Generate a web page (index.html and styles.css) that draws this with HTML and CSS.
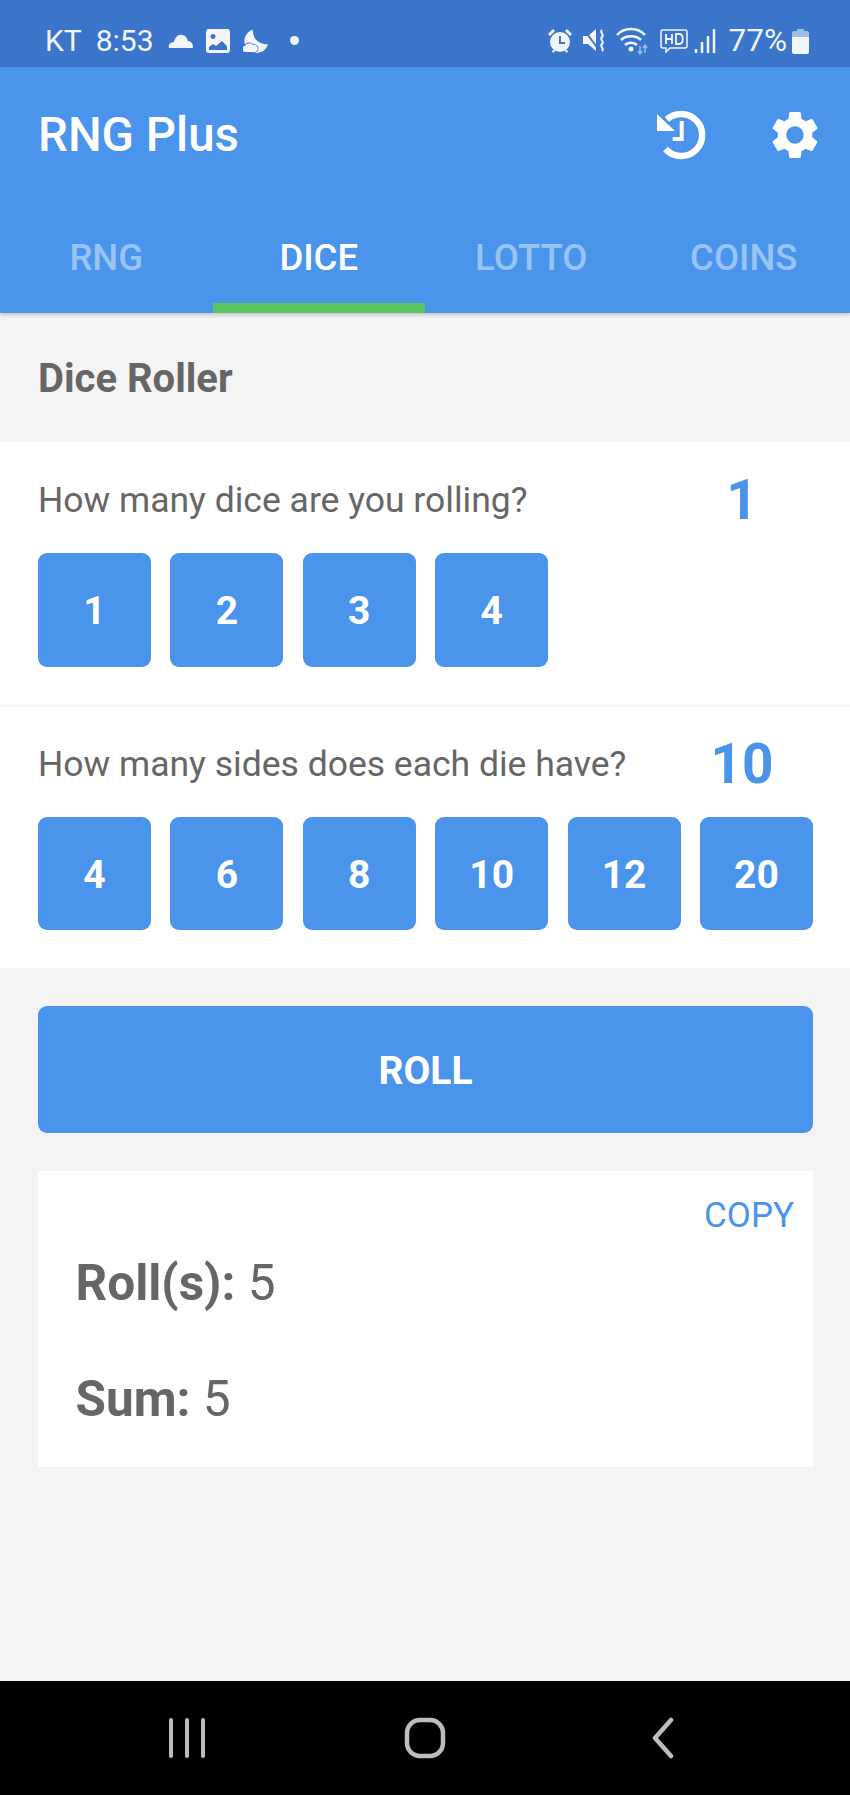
FILE: index.html
```html
<!DOCTYPE html>
<html lang='en'>
<head>
  <title>RNG Plus</title>
  <link rel="stylesheet" href="styles.css">
</head>
<body>
  <div class='phone'>
    <!-- Status Bar -->
    <div class='statusBar'>
      <div class='statusLeft'>
        <span class='carrier'>KT</span>
        <span>8:53</span>
        <svg class='cloudIcon' width='26' height='16' viewBox='0 0 26 16'><path d='M1 15c-1-3 1-6 5-6 1-4 4-8 8-7 3 0 5 3 6 6 3 0 5 3 5 6 0 1-1 1-2 1H2z' fill='#f2f6fc'/></svg>
        <svg class='photoIcon' width='24' height='24' viewBox='0 0 24 24'><path d='M3 0h18a3 3 0 0 1 3 3v18a3 3 0 0 1-3 3H3a3 3 0 0 1-3-3V3a3 3 0 0 1 3-3zM3 21h18v-4l-5-5-6 5-3-2-4 3zM7 5a2.500 2.500 0 1 0 0.010 0z' fill='#f2f6fc' fill-rule='evenodd'/></svg>
        <svg class='moonIcon' width='26' height='24' viewBox='0 0 26 24'><path d='M10 .5A12 12 0 1 0 25 15 13 13 0 0 1 10 .5z' fill='#f2f6fc'/><path d='M3 23a3 3 0 0 1-1-6c1-3 6-4 8-1a3.500 3.500 0 0 1 2 7z' fill='#f2f6fc' stroke='#3a75cb' stroke-width='1.500' paint-order='stroke'/></svg>
        <span class='dot'></span>
      </div>
      <div class='statusRight'>
        <svg width='26' height='26' viewBox='0 0 26 26'><circle cx='13' cy='14' r='10' fill='#f2f6fc'/><path d='M13 8v7h5' fill='none' stroke='#3a75cb' stroke-width='2'/><path d='M1 6l5-5 2 2-5 5zM25 6l-5-5-2 2 5 5zM5 23l3-2 1 1-3 3zM21 23l-3-2-1 1 3 3z' fill='#f2f6fc'/></svg>
        <svg class='muteIcon' width='24' height='26' viewBox='0 0 24 26'><path d='M0 8h5l8-7v22l-8-7H0z' fill='#f2f6fc'/><path d='M2 3l14 19' stroke='#3a75cb' stroke-width='2'/><path d='M19 2c-3 3 3 4 0 7s3 4 0 7 3 4 0 7' fill='none' stroke='#f2f6fc' stroke-width='2'/></svg>
        <svg class='wifiIcon' width='34' height='28' viewBox='0 0 34 28'><path d='M1 8c7-8 21-8 28 0M5 13c5-5 15-5 20 0M9 18c3-3 9-3 12 0' fill='none' stroke='#f2f6fc' stroke-width='2.500'/><circle cx='15' cy='22' r='2.500' fill='#f2f6fc'/><path d='M24 26v-7M29 26v-7M27 21l2-3 2 3M22 24l2 3 2-3' fill='none' stroke='#9dbde8' stroke-width='1.500'/></svg>
        <svg class='hdIcon' width='28' height='26' viewBox='0 0 28 26'><path d='M3 2h22a2 2 0 0 1 2 2v14a2 2 0 0 1-2 2H10l-4 4v-4H3a2 2 0 0 1-2-2V4a2 2 0 0 1 2-2z' fill='none' stroke='#f2f6fc' stroke-width='1.500'/><path d='M6 6v10M12 6v10M6 11h6M16 6v10h3c5 0 5-10 0-10z' fill='none' stroke='#f2f6fc' stroke-width='1.800'/></svg>
        <svg class='signalIcon' width='22' height='26' viewBox='0 0 22 26'><path d='M2 25v-4M8 25V14M14 25V8M20 25V1' stroke='#f2f6fc' stroke-width='2.500'/></svg>
        <span class='battery'>77%</span>
        <svg class='batteryIcon' width='17' height='26' viewBox='0 0 17 26'><path d='M5 1h7v2h3a2 2 0 0 1 2 2v4H0V5a2 2 0 0 1 2-2h3z' fill='#9dbde8'/><path d='M0 9h17v15a2 2 0 0 1-2 2H2a2 2 0 0 1-2-2z' fill='#f2f6fc'/></svg>
      </div>
    </div>

    <!-- App Bar and Tabs -->
    <div class='appBar'>
      <div class='titleRow'>
        <h1>RNG Plus</h1>
        <div class='appIcons'>
          <svg width='50' height='50' viewBox='0 0 50 50'><path d='M1 4v17h18z' fill='#fff'/><path d='M11 9.500A21 21 0 1 1 9.500 39' fill='none' stroke='#fff' stroke-width='6.500'/><path d='M25.700 11v18H16.700' fill='none' stroke='#fff' stroke-width='4'/></svg>
          <svg width='48' height='48' viewBox='2 2 20 20'><path d='M19.140 12.940c.04-.3.06-.61.06-.94 0-.32-.02-.64-.07-.94l2.030-1.580c.18-.14.23-.41.12-.61l-1.920-3.320c-.12-.22-.37-.29-.59-.22l-2.390.96c-.5-.38-1.030-.7-1.620-.94l-.36-2.540c-.04-.24-.24-.41-.48-.41h-3.840c-.24 0-.43.17-.47.41l-.36 2.540c-.59.24-1.130.57-1.620.94l-2.390-.96c-.22-.08-.47 0-.59.22L2.740 8.870c-.12.21-.08.47.12.61l2.030 1.580c-.05.3-.09.63-.09.94s.02.64.07.94l-2.030 1.580c-.18.14-.23.41-.12.61l1.920 3.320c.12.22.37.29.59.22l2.390-.96c.5.38 1.030.7 1.620.94l.36 2.540c.05.24.24.41.48.41h3.840c.24 0 .44-.17.47-.41l.36-2.540c.59-.24 1.130-.56 1.620-.94l2.390.96c.22.08.47 0 .59-.22l1.920-3.320c.12-.22.07-.47-.12-.61l-2.010-1.580zM12 15.600c-1.980 0-3.600-1.620-3.600-3.600s1.620-3.600 3.600-3.600 3.600 1.620 3.600 3.600-1.620 3.600-3.600 3.600z' fill='#fff'/></svg>
        </div>
      </div>
      <div class='tabs'>
        <div class='tab'>RNG</div>
        <div class='tab active'>DICE</div>
        <div class='tab'>LOTTO</div>
        <div class='tab'>COINS</div>
      </div>
    </div>

    <div class='content'>
      <h2>Dice Roller</h2>

      <!-- Dice Options -->
      <div class='options'>
        <div class='optionRow'>
          <div class='question'>
            <span>How many dice are you rolling?</span>
            <span class='picked'>1</span>
          </div>
          <div class='choices'>
            <button>1</button>
            <button>2</button>
            <button>3</button>
            <button>4</button>
          </div>
        </div>
        <div class='optionRow'>
          <div class='question'>
            <span>How many sides does each die have?</span>
            <span class='picked'>10</span>
          </div>
          <div class='choices'>
            <button>4</button>
            <button>6</button>
            <button>8</button>
            <button>10</button>
            <button>12</button>
            <button>20</button>
          </div>
        </div>
      </div>

      <button class='rollBtn'>ROLL</button>

      <!-- Result -->
      <div class='result'>
        <div class='copy'>COPY</div>
        <p><b>Roll(s):</b> 5</p>
        <p><b>Sum:</b> 5</p>
      </div>
    </div>

    <!-- Navigation Bar -->
    <div class='navBar'>
      <svg width='40' height='40' viewBox='0 0 40 40'><path d='M4 2v36M20 2v36M36 2v36' stroke='#bdbdbd' stroke-width='4' stroke-linecap='round'/></svg>
      <svg width='42' height='42' viewBox='0 0 42 42'><rect x='3' y='3' width='36' height='36' rx='13' fill='none' stroke='#bdbdbd' stroke-width='4.500'/></svg>
      <svg width='24' height='42' viewBox='0 0 24 42'><path d='M20 3L4 21l16 18' fill='none' stroke='#bdbdbd' stroke-width='4.500' stroke-linecap='round' stroke-linejoin='round'/></svg>
    </div>
  </div>
</body>
</html>
```

FILE: styles.css
```css
* {
  box-sizing: border-box;
}

body {
  margin: 0;
  background-color: #f4f4f4;
  font-family: Roboto, 'Noto Sans', sans-serif;
  color: #666666;
}

.phone {
  display: flex;
  flex-direction: column;
  width: 850px;
  height: 1795px;
  overflow: hidden;
}

.statusBar {
  display: flex;
  justify-content: space-between;
  align-items: center;
  height: 67px;
  padding: 14px 41px 0 45px;
  background-color: #3a75cb;
  color: #f2f6fc;
  font-size: 30px;
}

.statusLeft, .statusRight {
  display: flex;
  align-items: center;
}

.carrier {
  margin-right: 14px;
}

.cloudIcon {
  margin-left: 14px;
}

.photoIcon {
  margin-left: 12px;
}

.moonIcon {
  margin-left: 13px;
}

.dot {
  width: 9px;
  height: 9px;
  margin-left: 21px;
  border-radius: 50%;
  background-color: #f2f6fc;
}

.muteIcon {
  margin-left: 10px;
}

.wifiIcon {
  margin-left: 9px;
}

.hdIcon {
  margin-left: 10px;
}

.signalIcon {
  margin-left: 6px;
}

.battery {
  margin-left: 13px;
  font-size: 31.5px;
}

.batteryIcon {
  margin-left: 5px;
}

.appBar {
  height: 246px;
  background-color: #4a94ec;
  box-shadow: 0 2px 4px rgba(0, 0, 0, 0.2);
  z-index: 1;
}

.titleRow {
  display: flex;
  justify-content: space-between;
  align-items: center;
  height: 136px;
  padding: 0 31px 0 38px;
}

h1 {
  margin: 0;
  color: white;
  font-size: 47.5px;
  font-weight: 500;
}

.appIcons {
  display: flex;
  align-items: center;
  gap: 65.5px;
}

.tabs {
  display: flex;
  height: 110px;
}

.tab {
  flex: 1;
  padding-top: 33px;
  border-bottom: 10px solid transparent;
  color: #98c3f5;
  font-size: 36.5px;
  font-weight: 500;
  text-align: center;
}

.tab.active {
  border-bottom-color: #5cc460;
  color: white;
}

.content {
  flex: 1;
}

h2 {
  margin: 0;
  padding: 3px 38px 0;
  font-size: 40px;
  font-weight: 700;
  line-height: 126px;
}

.options {
  background-color: white;
}

.optionRow {
  padding: 0 37px 38px 38px;
}

.optionRow + .optionRow {
  border-top: 1px solid #ececec;
}

.question {
  display: flex;
  justify-content: space-between;
  align-items: center;
  height: 111px;
  padding-top: 5px;
  font-size: 35.5px;
}

.picked {
  width: 142px;
  color: #4a94ec;
  font-size: 55px;
  font-weight: 700;
  text-align: center;
}

.choices {
  display: flex;
  gap: 19.4px;
}

button {
  width: 113px;
  height: 113.5px;
  padding-top: 4px;
  border: none;
  border-radius: 9px;
  background-color: #4a94ec;
  color: white;
  font-family: Roboto, 'Noto Sans', sans-serif;
  font-size: 39px;
  font-weight: 700;
}

.rollBtn {
  display: block;
  width: 775px;
  height: 127px;
  margin: 38px 37px 0 38px;
}

.result {
  position: relative;
  height: 296px;
  margin: 38px 37px 0 38px;
  padding: 54px 37.5px 0;
  background-color: white;
}

.copy {
  position: absolute;
  top: 24px;
  right: 19px;
  color: #4a94ec;
  font-size: 35px;
}

.result p {
  margin: 0;
  font-size: 49.5px;
  line-height: 116px;
}

.navBar {
  display: grid;
  grid-template-columns: repeat(3, 238px);
  justify-content: center;
  justify-items: center;
  align-items: center;
  height: 114px;
  background-color: black;
}
```
